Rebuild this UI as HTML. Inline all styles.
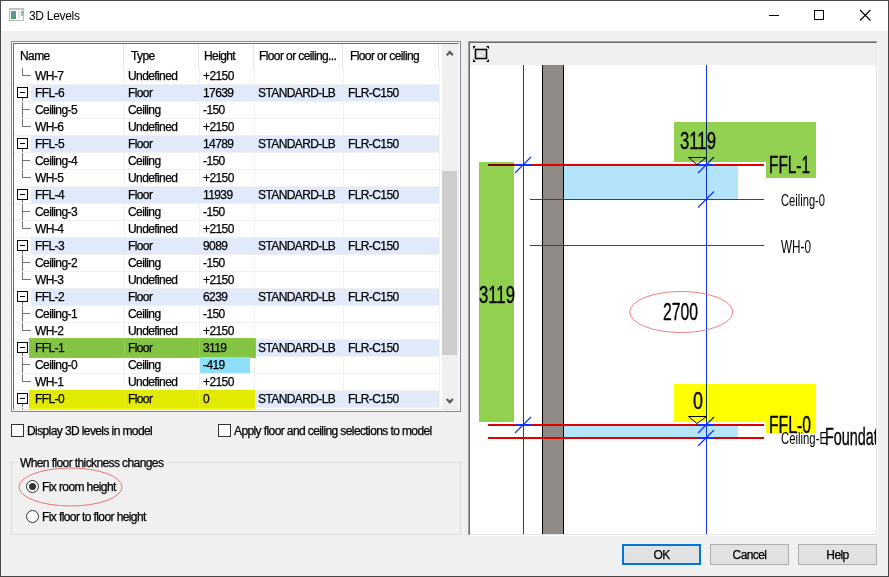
<!DOCTYPE html>
<html><head><meta charset="utf-8"><style>
*{margin:0;padding:0;box-sizing:border-box}
html,body{width:889px;height:577px;overflow:hidden;background:#f0f0f0}
body{position:relative;font-family:"Liberation Sans",sans-serif;font-size:11px;color:#000}
.a{position:absolute}
.t{position:absolute;white-space:nowrap;line-height:14px;font-size:12px;letter-spacing:-0.6px;-webkit-text-stroke:0.25px #000}
</style></head><body>

<div class="a" style="left:0;top:0;width:889px;height:577px;border:1px solid #474747"></div>
<div class="a" style="left:1px;top:1px;width:887px;height:30px;background:#fff"></div>
<div class="a" style="left:9px;top:8px;width:15px;height:13px;border:1px solid #b4b8bc;border-top:2px solid #c0c3c6;background:#fff"></div>
<div class="a" style="left:11px;top:11px;width:5px;height:8px;background:linear-gradient(#6a8cc8,#3daa58)"></div>
<div class="a" style="left:18px;top:11px;width:2px;height:8px;background:#e2e2e2"></div>
<div class="a" style="left:21px;top:11px;width:2px;height:5px;background:linear-gradient(#7a9ad0,#8fd88f)"></div>
<div class="t" style="left:29px;top:9px;font-size:12px;line-height:14px;letter-spacing:-0.3px;-webkit-text-stroke:0">3D Levels</div>
<div class="a" style="left:769px;top:15px;width:10px;height:1px;background:#000"></div>
<div class="a" style="left:814px;top:10px;width:10px;height:10px;border:1px solid #000"></div>
<svg class="a" style="left:855px;top:5px" width="20" height="20"><path d="M5 5 L15.5 15.5 M15.5 5 L5 15.5" stroke="#000" stroke-width="1.1"/></svg>
<div class="a" style="left:11px;top:41px;width:450px;height:371px;background:#fff;border:1px solid #828790"></div>
<div class="a" style="left:13px;top:43px;width:446px;height:367px;border-left:1px solid #696969;border-top:1px solid #696969;border-right:1px solid #e3e3e3;border-bottom:1px solid #e3e3e3"></div>
<div class="a" style="left:123px;top:44px;width:1px;height:24px;background:#e5e5e5"></div>
<div class="a" style="left:198px;top:44px;width:1px;height:24px;background:#e5e5e5"></div>
<div class="a" style="left:253px;top:44px;width:1px;height:24px;background:#e5e5e5"></div>
<div class="a" style="left:342px;top:44px;width:1px;height:24px;background:#e5e5e5"></div>
<div class="a" style="left:438px;top:44px;width:1px;height:24px;background:#e5e5e5"></div>
<div class="t" style="left:20px;top:49px">Name</div>
<div class="t" style="left:131px;top:49px">Type</div>
<div class="t" style="left:204px;top:49px">Height</div>
<div class="t" style="left:259px;top:49px">Floor or ceiling...</div>
<div class="t" style="left:350px;top:49px">Floor or ceiling</div>
<div class="a" style="left:124px;top:68px;width:1px;height:340px;background:#f0f0f0"></div>
<div class="a" style="left:199px;top:68px;width:1px;height:340px;background:#f0f0f0"></div>
<div class="a" style="left:254px;top:68px;width:1px;height:340px;background:#f0f0f0"></div>
<div class="a" style="left:343px;top:68px;width:1px;height:340px;background:#f0f0f0"></div>
<div class="a" style="left:439px;top:68px;width:1px;height:340px;background:#f0f0f0"></div>
<div class="a" style="left:14px;top:84px;width:425px;height:1px;background:#f0f0f0"></div>
<div class="a" style="left:14px;top:101px;width:425px;height:1px;background:#f0f0f0"></div>
<div class="a" style="left:14px;top:118px;width:425px;height:1px;background:#f0f0f0"></div>
<div class="a" style="left:14px;top:135px;width:425px;height:1px;background:#f0f0f0"></div>
<div class="a" style="left:14px;top:152px;width:425px;height:1px;background:#f0f0f0"></div>
<div class="a" style="left:14px;top:169px;width:425px;height:1px;background:#f0f0f0"></div>
<div class="a" style="left:14px;top:186px;width:425px;height:1px;background:#f0f0f0"></div>
<div class="a" style="left:14px;top:203px;width:425px;height:1px;background:#f0f0f0"></div>
<div class="a" style="left:14px;top:220px;width:425px;height:1px;background:#f0f0f0"></div>
<div class="a" style="left:14px;top:237px;width:425px;height:1px;background:#f0f0f0"></div>
<div class="a" style="left:14px;top:254px;width:425px;height:1px;background:#f0f0f0"></div>
<div class="a" style="left:14px;top:271px;width:425px;height:1px;background:#f0f0f0"></div>
<div class="a" style="left:14px;top:288px;width:425px;height:1px;background:#f0f0f0"></div>
<div class="a" style="left:14px;top:305px;width:425px;height:1px;background:#f0f0f0"></div>
<div class="a" style="left:14px;top:322px;width:425px;height:1px;background:#f0f0f0"></div>
<div class="a" style="left:14px;top:339px;width:425px;height:1px;background:#f0f0f0"></div>
<div class="a" style="left:14px;top:356px;width:425px;height:1px;background:#f0f0f0"></div>
<div class="a" style="left:14px;top:373px;width:425px;height:1px;background:#f0f0f0"></div>
<div class="a" style="left:14px;top:390px;width:425px;height:1px;background:#f0f0f0"></div>
<div class="a" style="left:14px;top:407px;width:425px;height:1px;background:#f0f0f0"></div>
<div class="a" style="left:22px;top:68px;width:1px;height:8px;background:#737373"></div>
<div class="a" style="left:22px;top:75px;width:9px;height:1px;background:#737373"></div>
<div class="t" style="left:35px;top:69px">WH-7</div>
<div class="t" style="left:128px;top:69px">Undefined</div>
<div class="t" style="left:203px;top:69px">+2150</div>
<div class="a" style="left:31px;top:85px;width:408px;height:16px;background:#e0eafb"></div>
<div class="a" style="left:17px;top:87px;width:11px;height:11px;border:1px solid #000;background:#fff"></div>
<div class="a" style="left:20px;top:92px;width:5px;height:1px;background:#000"></div>
<div class="a" style="left:22px;top:98px;width:1px;height:3px;background:#737373"></div>
<div class="t" style="left:35px;top:86px">FFL-6</div>
<div class="t" style="left:128px;top:86px">Floor</div>
<div class="t" style="left:203px;top:86px">17639</div>
<div class="t" style="left:258px;top:86px">STANDARD-LB</div>
<div class="t" style="left:348px;top:86px">FLR-C150</div>
<div class="a" style="left:22px;top:102px;width:1px;height:16px;background:#737373"></div>
<div class="a" style="left:22px;top:109px;width:8px;height:1px;background:#737373"></div>
<div class="t" style="left:35px;top:103px">Ceiling-5</div>
<div class="t" style="left:128px;top:103px">Ceiling</div>
<div class="t" style="left:203px;top:103px">-150</div>
<div class="a" style="left:22px;top:119px;width:1px;height:8px;background:#737373"></div>
<div class="a" style="left:22px;top:126px;width:9px;height:1px;background:#737373"></div>
<div class="t" style="left:35px;top:120px">WH-6</div>
<div class="t" style="left:128px;top:120px">Undefined</div>
<div class="t" style="left:203px;top:120px">+2150</div>
<div class="a" style="left:31px;top:136px;width:408px;height:16px;background:#e0eafb"></div>
<div class="a" style="left:17px;top:138px;width:11px;height:11px;border:1px solid #000;background:#fff"></div>
<div class="a" style="left:20px;top:143px;width:5px;height:1px;background:#000"></div>
<div class="a" style="left:22px;top:149px;width:1px;height:3px;background:#737373"></div>
<div class="t" style="left:35px;top:137px">FFL-5</div>
<div class="t" style="left:128px;top:137px">Floor</div>
<div class="t" style="left:203px;top:137px">14789</div>
<div class="t" style="left:258px;top:137px">STANDARD-LB</div>
<div class="t" style="left:348px;top:137px">FLR-C150</div>
<div class="a" style="left:22px;top:153px;width:1px;height:16px;background:#737373"></div>
<div class="a" style="left:22px;top:160px;width:8px;height:1px;background:#737373"></div>
<div class="t" style="left:35px;top:154px">Ceiling-4</div>
<div class="t" style="left:128px;top:154px">Ceiling</div>
<div class="t" style="left:203px;top:154px">-150</div>
<div class="a" style="left:22px;top:170px;width:1px;height:8px;background:#737373"></div>
<div class="a" style="left:22px;top:177px;width:9px;height:1px;background:#737373"></div>
<div class="t" style="left:35px;top:171px">WH-5</div>
<div class="t" style="left:128px;top:171px">Undefined</div>
<div class="t" style="left:203px;top:171px">+2150</div>
<div class="a" style="left:31px;top:187px;width:408px;height:16px;background:#e0eafb"></div>
<div class="a" style="left:17px;top:189px;width:11px;height:11px;border:1px solid #000;background:#fff"></div>
<div class="a" style="left:20px;top:194px;width:5px;height:1px;background:#000"></div>
<div class="a" style="left:22px;top:200px;width:1px;height:3px;background:#737373"></div>
<div class="t" style="left:35px;top:188px">FFL-4</div>
<div class="t" style="left:128px;top:188px">Floor</div>
<div class="t" style="left:203px;top:188px">11939</div>
<div class="t" style="left:258px;top:188px">STANDARD-LB</div>
<div class="t" style="left:348px;top:188px">FLR-C150</div>
<div class="a" style="left:22px;top:204px;width:1px;height:16px;background:#737373"></div>
<div class="a" style="left:22px;top:211px;width:8px;height:1px;background:#737373"></div>
<div class="t" style="left:35px;top:205px">Ceiling-3</div>
<div class="t" style="left:128px;top:205px">Ceiling</div>
<div class="t" style="left:203px;top:205px">-150</div>
<div class="a" style="left:22px;top:221px;width:1px;height:8px;background:#737373"></div>
<div class="a" style="left:22px;top:228px;width:9px;height:1px;background:#737373"></div>
<div class="t" style="left:35px;top:222px">WH-4</div>
<div class="t" style="left:128px;top:222px">Undefined</div>
<div class="t" style="left:203px;top:222px">+2150</div>
<div class="a" style="left:31px;top:238px;width:408px;height:16px;background:#e0eafb"></div>
<div class="a" style="left:17px;top:240px;width:11px;height:11px;border:1px solid #000;background:#fff"></div>
<div class="a" style="left:20px;top:245px;width:5px;height:1px;background:#000"></div>
<div class="a" style="left:22px;top:251px;width:1px;height:3px;background:#737373"></div>
<div class="t" style="left:35px;top:239px">FFL-3</div>
<div class="t" style="left:128px;top:239px">Floor</div>
<div class="t" style="left:203px;top:239px">9089</div>
<div class="t" style="left:258px;top:239px">STANDARD-LB</div>
<div class="t" style="left:348px;top:239px">FLR-C150</div>
<div class="a" style="left:22px;top:255px;width:1px;height:16px;background:#737373"></div>
<div class="a" style="left:22px;top:262px;width:8px;height:1px;background:#737373"></div>
<div class="t" style="left:35px;top:256px">Ceiling-2</div>
<div class="t" style="left:128px;top:256px">Ceiling</div>
<div class="t" style="left:203px;top:256px">-150</div>
<div class="a" style="left:22px;top:272px;width:1px;height:8px;background:#737373"></div>
<div class="a" style="left:22px;top:279px;width:9px;height:1px;background:#737373"></div>
<div class="t" style="left:35px;top:273px">WH-3</div>
<div class="t" style="left:128px;top:273px">Undefined</div>
<div class="t" style="left:203px;top:273px">+2150</div>
<div class="a" style="left:31px;top:289px;width:408px;height:16px;background:#e0eafb"></div>
<div class="a" style="left:17px;top:291px;width:11px;height:11px;border:1px solid #000;background:#fff"></div>
<div class="a" style="left:20px;top:296px;width:5px;height:1px;background:#000"></div>
<div class="a" style="left:22px;top:302px;width:1px;height:3px;background:#737373"></div>
<div class="t" style="left:35px;top:290px">FFL-2</div>
<div class="t" style="left:128px;top:290px">Floor</div>
<div class="t" style="left:203px;top:290px">6239</div>
<div class="t" style="left:258px;top:290px">STANDARD-LB</div>
<div class="t" style="left:348px;top:290px">FLR-C150</div>
<div class="a" style="left:22px;top:306px;width:1px;height:16px;background:#737373"></div>
<div class="a" style="left:22px;top:313px;width:8px;height:1px;background:#737373"></div>
<div class="t" style="left:35px;top:307px">Ceiling-1</div>
<div class="t" style="left:128px;top:307px">Ceiling</div>
<div class="t" style="left:203px;top:307px">-150</div>
<div class="a" style="left:22px;top:323px;width:1px;height:8px;background:#737373"></div>
<div class="a" style="left:22px;top:330px;width:9px;height:1px;background:#737373"></div>
<div class="t" style="left:35px;top:324px">WH-2</div>
<div class="t" style="left:128px;top:324px">Undefined</div>
<div class="t" style="left:203px;top:324px">+2150</div>
<div class="a" style="left:29px;top:338px;width:227px;height:20px;background:#84c443;border:1px solid #8ccb4a"></div>
<div class="a" style="left:256px;top:340px;width:183px;height:16px;background:#e0eafb"></div>
<div class="a" style="left:124px;top:339px;width:1px;height:18px;background:rgba(255,255,255,0.15)"></div>
<div class="a" style="left:199px;top:339px;width:1px;height:18px;background:rgba(255,255,255,0.15)"></div>
<div class="a" style="left:17px;top:342px;width:11px;height:11px;border:1px solid #000;background:#fff"></div>
<div class="a" style="left:20px;top:347px;width:5px;height:1px;background:#000"></div>
<div class="a" style="left:22px;top:353px;width:1px;height:3px;background:#737373"></div>
<div class="t" style="left:35px;top:341px">FFL-1</div>
<div class="t" style="left:128px;top:341px">Floor</div>
<div class="t" style="left:203px;top:341px">3119</div>
<div class="t" style="left:258px;top:341px">STANDARD-LB</div>
<div class="t" style="left:348px;top:341px">FLR-C150</div>
<div class="a" style="left:200px;top:357px;width:50px;height:16px;background:#8ddffa"></div>
<div class="a" style="left:22px;top:357px;width:1px;height:16px;background:#737373"></div>
<div class="a" style="left:22px;top:364px;width:8px;height:1px;background:#737373"></div>
<div class="t" style="left:35px;top:358px">Ceiling-0</div>
<div class="t" style="left:128px;top:358px">Ceiling</div>
<div class="t" style="left:203px;top:358px">-419</div>
<div class="a" style="left:22px;top:374px;width:1px;height:8px;background:#737373"></div>
<div class="a" style="left:22px;top:381px;width:9px;height:1px;background:#737373"></div>
<div class="t" style="left:35px;top:375px">WH-1</div>
<div class="t" style="left:128px;top:375px">Undefined</div>
<div class="t" style="left:203px;top:375px">+2150</div>
<div class="a" style="left:29px;top:390px;width:226px;height:20px;background:#e1ea00;border-bottom:2px solid #f4f800"></div>
<div class="a" style="left:255px;top:391px;width:184px;height:16px;background:#e0eafb"></div>
<div class="a" style="left:124px;top:390px;width:1px;height:18px;background:rgba(255,255,255,0.15)"></div>
<div class="a" style="left:199px;top:390px;width:1px;height:18px;background:rgba(255,255,255,0.15)"></div>
<div class="a" style="left:17px;top:393px;width:11px;height:11px;border:1px solid #000;background:#fff"></div>
<div class="a" style="left:20px;top:398px;width:5px;height:1px;background:#000"></div>
<div class="a" style="left:22px;top:404px;width:1px;height:3px;background:#737373"></div>
<div class="t" style="left:35px;top:392px">FFL-0</div>
<div class="t" style="left:128px;top:392px">Floor</div>
<div class="t" style="left:203px;top:392px">0</div>
<div class="t" style="left:258px;top:392px">STANDARD-LB</div>
<div class="t" style="left:348px;top:392px">FLR-C150</div>
<div class="a" style="left:22px;top:408px;width:1px;height:1px;background:#737373"></div>
<div class="a" style="left:442px;top:44px;width:17px;height:365px;background:#f0f0f0"></div>
<div class="a" style="left:442px;top:171px;width:15px;height:184px;background:#cdcdcd"></div>
<svg class="a" style="left:442px;top:44px" width="17" height="17"><path d="M4.8 11.3 L7.8 8 L10.8 11.3" stroke="#5a5a5a" stroke-width="2.2" fill="none"/></svg>
<svg class="a" style="left:442px;top:391px" width="17" height="17"><path d="M4.8 8 L7.8 11.3 L10.8 8" stroke="#5a5a5a" stroke-width="2.2" fill="none"/></svg>
<div class="a" style="left:11px;top:424px;width:13px;height:13px;border:1px solid #333;background:#fff"></div>
<div class="t" style="left:27px;top:424px">Display 3D levels in model</div>
<div class="a" style="left:218px;top:424px;width:13px;height:13px;border:1px solid #333;background:#fff"></div>
<div class="t" style="left:234px;top:424px">Apply floor and ceiling selections to model</div>
<div class="a" style="left:11px;top:462px;width:450px;height:73px;border:1px solid #dcdcdc"></div>
<div class="t" style="left:17px;top:456px;background:#f0f0f0;padding:0 3px">When floor thickness changes</div>
<svg class="a" style="left:0;top:440px" width="470" height="100"><ellipse cx="70.5" cy="47" rx="51.5" ry="19" fill="none" stroke="#e87474" stroke-width="1"/><circle cx="32.5" cy="46.5" r="6" fill="#fff" stroke="#333" stroke-width="1"/><circle cx="32.5" cy="46.5" r="3.5" fill="#333"/><circle cx="32.5" cy="76.5" r="6" fill="#fff" stroke="#333" stroke-width="1"/></svg>
<div class="t" style="left:42px;top:480px">Fix room height</div>
<div class="t" style="left:42px;top:510px">Fix floor to floor height</div>
<div class="a" style="left:622px;top:544px;width:79px;height:21px;background:#e1e1e1;border:2px solid #0078d7"></div>
<div class="t" style="left:622px;top:548px;width:79px;text-align:center">OK</div>
<div class="a" style="left:710px;top:544px;width:79px;height:21px;background:#e1e1e1;border:1px solid #adadad"></div>
<div class="t" style="left:710px;top:548px;width:79px;text-align:center">Cancel</div>
<div class="a" style="left:798px;top:544px;width:79px;height:21px;background:#e1e1e1;border:1px solid #adadad"></div>
<div class="t" style="left:798px;top:548px;width:79px;text-align:center">Help</div>
<div class="a" style="left:468px;top:41px;width:410px;height:495px;border-left:1px solid #a0a0a0;border-top:1px solid #a0a0a0;border-right:1px solid #fff;border-bottom:1px solid #fff"></div>
<div class="a" style="left:469px;top:42px;width:408px;height:493px;border-left:1px solid #696969;border-top:1px solid #696969;border-right:1px solid #e3e3e3;border-bottom:1px solid #e3e3e3"></div>
<div class="a" style="left:470px;top:43px;width:406px;height:22px;background:#f0f0f0"></div>
<svg class="a" style="left:470px;top:65px" width="406" height="469" viewBox="470 65 406 469">
<rect x="470" y="65" width="406" height="469" fill="#fff"/>
<rect x="564" y="166" width="174" height="33" fill="#b4e4fa"/>
<rect x="564" y="426" width="174" height="11" fill="#b4e4fa"/>
<rect x="542.5" y="60" width="21" height="480" fill="#8f8a86" stroke="#000" stroke-width="1"/>
<g stroke="#e00000" fill="none">
<path d="M488 165 H764" stroke-width="2"/>
<path d="M530 199.5 H764" stroke-width="1"/>
<path d="M530 245.5 H764" stroke-width="1"/>
<path d="M488 425 H764" stroke-width="2"/>
<path d="M488 438 H764" stroke-width="2"/>
</g>
<g stroke="#1432ff" fill="none" stroke-width="1">
<path d="M523.5 65 V534"/>
<path d="M706.5 65 V534"/>
<path d="M515 173 L531 157 M698 173 L714 157 M698 207.5 L714 191.5 M515 433 L531 417 M698 433 L714 417 M698 446 L714 430" stroke-width="1.2"/>
<path d="M515 165 H531 M698 165 H714 M515 425 H531 M698 425 H714 M698 438 H714" stroke-width="2"/>
<path d="M698 199.5 H714"/>
</g>
<g style="mix-blend-mode:multiply">
<rect x="479" y="162" width="35" height="260" fill="#92d050"/>
<rect x="674" y="122" width="142" height="40" fill="#92d050"/>
<rect x="766" y="162" width="50" height="16" fill="#92d050"/>
<rect x="674" y="384" width="142" height="38" fill="#ffff00"/>
<rect x="766" y="422" width="50" height="11" fill="#ffff00"/>
</g>
<g stroke="#000" fill="none" stroke-width="1">
<path d="M688.5 157.5 H706.5 L697 164.5 Z"/>
<path d="M688.5 416.5 H706.5 L697 423.5 Z"/>
</g>
<ellipse cx="681.2" cy="312" rx="51.5" ry="20.5" fill="none" stroke="#f08080" stroke-width="1"/>
<g font-family="Liberation Sans" fill="#000" stroke="#000" stroke-width="0.35">
<text x="680" y="149" font-size="23.5" textLength="36" lengthAdjust="spacingAndGlyphs">3119</text>
<text x="769" y="173" font-size="23" textLength="41" lengthAdjust="spacingAndGlyphs">FFL-1</text>
<text stroke-width="0" x="781" y="206" font-size="16" textLength="44" lengthAdjust="spacingAndGlyphs">Ceiling-0</text>
<text stroke-width="0" x="781" y="253" font-size="18" textLength="30" lengthAdjust="spacingAndGlyphs">WH-0</text>
<text x="663" y="320" font-size="23.5" textLength="35" lengthAdjust="spacingAndGlyphs">2700</text>
<text x="479" y="303" font-size="23.5" textLength="36" lengthAdjust="spacingAndGlyphs">3119</text>
<text x="693" y="409" font-size="23.5" textLength="10" lengthAdjust="spacingAndGlyphs">0</text>
<text x="769" y="433" font-size="23" textLength="42" lengthAdjust="spacingAndGlyphs">FFL-0</text>
<text stroke-width="0" x="781" y="444" font-size="16" textLength="46" lengthAdjust="spacingAndGlyphs">Ceiling-E</text>
<text x="825" y="445" font-size="23" textLength="72" lengthAdjust="spacingAndGlyphs">Foundation</text>
</g>
</svg>

<svg class="a" style="left:470px;top:43px" width="24" height="22" viewBox="470 43 24 22"><rect x="475.5" y="49.5" width="11" height="9" fill="none" stroke="#000" stroke-width="1.6"/><rect x="477" y="51" width="8" height="6" fill="none" stroke="#c8c8c8" stroke-width="0.8"/><path d="M478 53 H482 V55 H485" fill="none" stroke="#c8c8c8" stroke-width="0.8"/><path d="M473 46 H476 L473 49 Z M489 46 V49 L486 46 Z M473 62 V59 L476 62 Z M489 62 H486 L489 59 Z" fill="#000"/></svg>
</body></html>
